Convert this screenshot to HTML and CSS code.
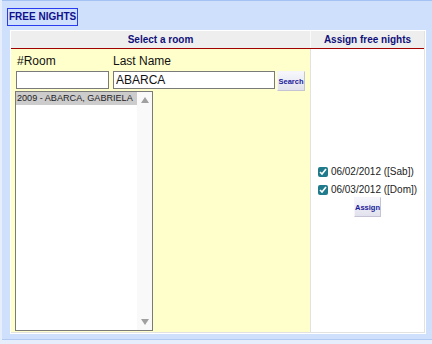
FILE: index.html
```html
<!DOCTYPE html>
<html lang="es">
<head>
    <meta charset="UTF-8">
    <title>Free nights</title>
    <link rel="stylesheet" href="styles.css">
</head>
<body>

    <div class="frame">
        <div class="tab-title">FREE NIGHTS</div>

        <div class="panel">
            <div class="board">
                <div class="heads">
                    <div class="th th-room">Select a room</div>
                    <div class="th th-assign">Assign free nights</div>
                </div>

                <div class="cols">
                    <!-- Room search -->
                    <div class="room-cell">
                        <div class="search-grid">
                            <div class="lbl lbl-room">#Room</div>
                            <div class="lbl lbl-name">Last Name</div>
                            <div></div>
                            <input class="txt txt-room" type="text" value="">
                            <input class="txt txt-name" type="text" value="ABARCA">
                            <button class="btn">Search</button>
                        </div>
                        <div class="listbox">
                            <div class="options">
                                <div class="opt selected">2009 - ABARCA, GABRIELA</div>
                            </div>
                            <div class="scrollbar">
                                <span class="arrow up"></span>
                                <span class="arrow down"></span>
                            </div>
                        </div>
                    </div>

                    <!-- Nights -->
                    <div class="assign-cell">
                        <div class="nights">
                            <label class="night"><input type="checkbox" checked> 06/02/2012 ([Sab])</label>
                            <label class="night"><input type="checkbox" checked> 06/03/2012 ([Dom])</label>
                        </div>
                        <button class="btn btn-assign">Assign</button>
                    </div>
                </div>
            </div>
        </div>
    </div>

</body>
</html>
```

FILE: styles.css
```css
body {
    margin: 0;
    background-color: #e6eefc;
    font-family: 'Liberation Sans', Arial, sans-serif;
    color: #222;
}

.frame {
    margin-left: 2px;
    height: 331px;
    padding: 7px 0 0 5px;
    background-color: #cfe0fc;
    border-top: 1px solid #a4c2f2;
    border-bottom: 1px solid #b2caf2;
}

.tab-title {
    display: inline-block;
    padding: 0 1px;
    border: 1px solid #2a3cf0;
    color: #10108c;
    font-size: 10px;
    font-weight: bold;
    line-height: 16px;
    vertical-align: top;
}

.panel {
    margin: 4px 0 0 3px;
    width: 416px;
    height: 304px;
    padding: 1px;
    box-sizing: border-box;
    background-color: #fff;
}

.board {
    height: 100%;
    display: flex;
    flex-direction: column;
    border-right: 1px solid #e2e2e2;
    border-bottom: 1px solid #e2e2e2;
    box-sizing: border-box;
}

/* header row */
.heads {
    display: flex;
    border-bottom: 1px solid #a00000;
}
.th {
    height: 17px;
    line-height: 17px;
    background-color: #eeeeee;
    color: #10107a;
    font-size: 10px;
    font-weight: bold;
    text-align: center;
}
.th-room {
    width: 299px;
    border-right: 1px solid #fafafa;
}
.th-assign {
    flex: 1;
}

.cols {
    flex: 1;
    display: flex;
}

/* left column */
.room-cell {
    width: 295px;
    padding: 5px 0 1px 4px;
    display: flex;
    flex-direction: column;
    background-color: #ffffcc;
    border-right: 1px solid #e2e2e2;
}

.search-grid {
    display: grid;
    grid-template-columns: 98px 164px 28px;
    grid-template-rows: 14px 20px;
    row-gap: 3px;
    align-items: start;
}
.lbl {
    font-size: 12px;
    line-height: 14px;
    color: #111;
}
.lbl-room { padding-left: 2px; }

.txt {
    height: 18px;
    margin: 0;
    padding: 0 2px;
    box-sizing: border-box;
    border: 1px solid #7a7a7a;
    background: #fff;
    font-family: 'Liberation Sans', Arial, sans-serif;
    font-size: 12px;
    color: #111;
    outline: none;
}
.txt-room {
    width: 93px;
    margin-left: 1px;
}
.txt-name {
    width: 162px;
}

.btn {
    width: 28px;
    height: 20px;
    margin: 0;
    padding: 0;
    border: 1px solid #c4c4d4;
    border-top-color: #f4f4fa;
    border-left-color: #f4f4fa;
    background: linear-gradient(#f6f6fc, #e2e2ee);
    color: #1a1a99;
    font-family: 'Liberation Sans', Arial, sans-serif;
    font-size: 7.5px;
    font-weight: bold;
}

.listbox {
    flex: 1;
    width: 138px;
    display: flex;
    border: 1px solid #7a7a7a;
    box-sizing: border-box;
    background-color: #fff;
}
.options {
    width: 121px;
}
.opt {
    height: 13px;
    line-height: 13px;
    padding-left: 1px;
    font-size: 9.1px;
    white-space: nowrap;
    overflow: hidden;
}
.opt.selected {
    background-color: #cccccc;
    color: #222;
}
.scrollbar {
    flex: 1;
    display: flex;
    flex-direction: column;
    justify-content: space-between;
    align-items: center;
    padding: 5px 0 5px;
    background-color: #f9f9f9;
}
.arrow {
    width: 0;
    height: 0;
    border-left: 4px solid transparent;
    border-right: 4px solid transparent;
}
.arrow.up { border-bottom: 6px solid #a0a0a0; }
.arrow.down { border-top: 6px solid #a0a0a0; }

/* right column */
.assign-cell {
    flex: 1;
    display: flex;
    flex-direction: column;
    align-items: center;
    justify-content: center;
    padding-top: 1px;
    background-color: #fff;
}
.nights {
    display: flex;
    flex-direction: column;
    gap: 5px;
}
.night {
    display: flex;
    align-items: center;
    height: 13px;
    font-size: 10px;
    color: #222;
    white-space: nowrap;
}
.night input {
    width: 10px;
    height: 10px;
    margin: 0 3px 0 0;
    accent-color: #1f7a8c;
}
.btn-assign {
    width: 27px;
    margin-top: 1px;
}
```
